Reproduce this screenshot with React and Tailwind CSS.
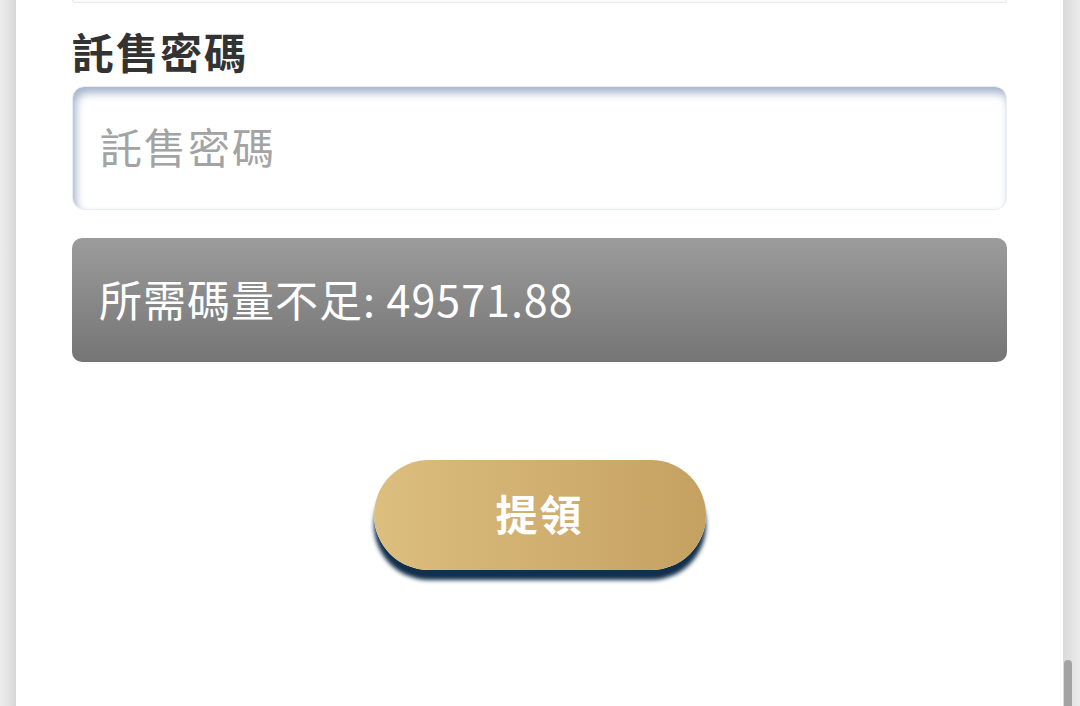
import React from "react";

export default function App() {
  const font = { fontFamily: '"Noto Sans CJK TC", "Noto Sans", sans-serif' };
  return (
    <div className="flex w-[1080px] h-[706px] overflow-hidden bg-white" style={font}>
      <div className="w-[16px] h-full bg-gradient-to-r from-[#ececec] via-[#e4e4e4] to-[#d6d6d6]" />
      <div className="flex-1 flex flex-col px-[56px] bg-white">
        <div className="h-[3px] rounded-b-[12px] border-b border-x border-[#e6e9ee] bg-[#fbfbfc]" />
        <div className="mt-[26px] h-[44px] flex items-center text-[42px] font-bold leading-none text-[#333333] tracking-[2px]">
          託售密碼
        </div>
        <input
          readOnly
          placeholder="託售密碼"
          className="mt-[13px] h-[124px] w-full rounded-[12px] border border-[#e9ecf1] bg-white pl-[27px] pb-[6px] text-[42px] leading-none tracking-[2px] outline-none placeholder:text-[#a3a3a3] shadow-[inset_3px_6px_8px_rgba(115,138,175,0.65)]"
          style={font}
        />
        <div className="mt-[28px] h-[124px] rounded-[10px] bg-gradient-to-b from-[#9c9c9c] to-[#757575] flex items-center pl-[27px] pb-[4px] text-[43px] leading-none text-white tracking-[1px]">
          所需碼量不足: 49571.88
        </div>
        <div className="mt-[98px] flex justify-center">
          <button
            className="w-[332px] h-[110px] rounded-full bg-gradient-to-r from-[#dcbe7f] to-[#c5a161] text-white font-bold text-[42px] leading-none tracking-[2px] pb-[5px] shadow-[0_10px_4px_#12304b]"
            style={font}
          >
            提領
          </button>
        </div>
      </div>
      <div className="w-[17px] h-full bg-gradient-to-r from-[#d9d9d9] to-[#ececec] flex flex-col justify-end pl-[1px]">
        <div className="w-[8px] h-[46px] rounded-t-[4px] bg-[#a3a3a3]" />
      </div>
    </div>
  );
}
